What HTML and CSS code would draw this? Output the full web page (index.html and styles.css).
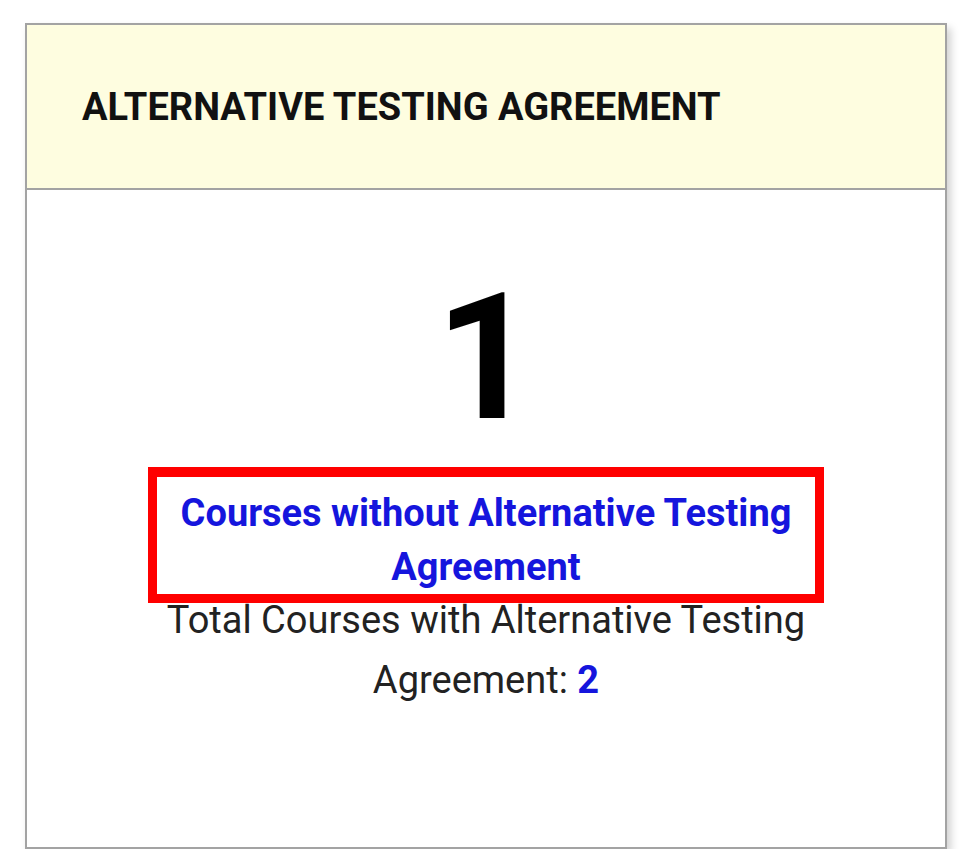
FILE: index.html
```html
<!DOCTYPE html>
<html lang="en">
<head>
    <meta charset="UTF-8">
    <title>Alternative Testing Agreement</title>
    <link rel="stylesheet" href="styles.css">
</head>
<body>
    <div class="card">
        <div class="card-header">
            <h2 class="card-title">ALTERNATIVE TESTING AGREEMENT</h2>
        </div>
        <div class="card-body">
            <div class="big-number">1</div>
            <div class="highlight">
                <a class="link" href="#">Courses without Alternative Testing Agreement</a>
            </div>
            <p class="total">Total Courses with Alternative Testing Agreement: <a class="count" href="#">2</a></p>
        </div>
    </div>
</body>
</html>
```

FILE: styles.css
```css
* {
    margin: 0;
    padding: 0;
    box-sizing: border-box;
}

body {
    background: #fff;
    font-family: Roboto, "Liberation Sans", sans-serif;
    padding: 23px 0 0 25px;
}

.card {
    width: 922px;
    height: 826px;
    border: 2px solid #a3a3a3;
    background: #fff;
    box-shadow: 4px 5px 8px rgba(0,0,0,0.18);
    display: flex;
    flex-direction: column;
}

.card-header {
    height: 165px;
    background: #fefde0;
    border-bottom: 2px solid #a3a3a3;
    display: flex;
    align-items: center;
    padding-left: 55px;
}

.card-title {
    font-size: 38px;
    font-weight: 700;
    color: #111;
}

.card-body {
    display: flex;
    flex-direction: column;
    align-items: center;
    text-align: center;
    padding-top: 80px;
}

.big-number {
    font-size: 176px;
    font-weight: 700;
    line-height: 1;
    color: #000;
}

.highlight {
    width: 676px;
    border: 10px solid #f00;
    border-left-width: 9px;
    border-right-width: 9px;
    border-bottom-width: 9px;
    padding: 9px 10px 0;
    margin-top: 21px;
}

.link {
    font-size: 38px;
    font-weight: 700;
    line-height: 54px;
    color: #1515dd;
    text-decoration: none;
}

.total {
    width: 680px;
    font-size: 38px;
    line-height: 60px;
    color: #222;
    margin-top: -13px;
}

.count {
    font-weight: 700;
    color: #1515dd;
    text-decoration: none;
}
```
